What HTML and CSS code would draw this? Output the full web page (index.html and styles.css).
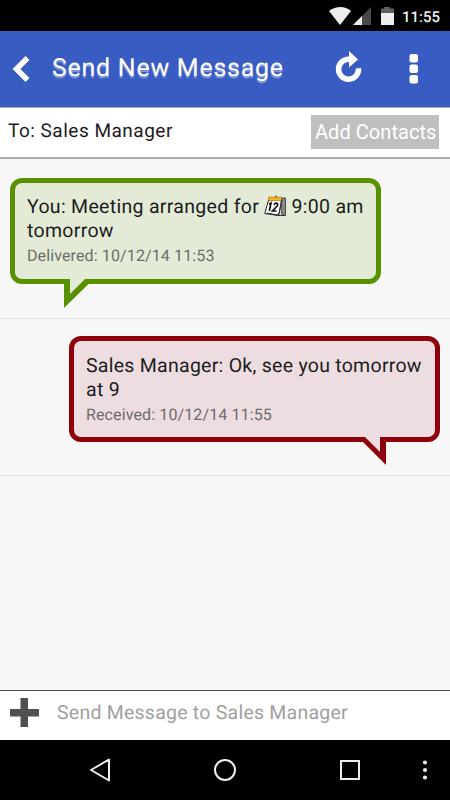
FILE: index.html
```html
<!DOCTYPE html>
<html lang="en">
<head>
<meta charset="utf-8">
<title>Send New Message</title>
<link rel="stylesheet" href="styles.css">
</head>
<body>
<div class="status">
  <svg class="signals" width="66" height="20" viewBox="0 0 66 20">
    <path fill="#eee" d="M0 4C7-1.300 16-1.300 22 4L11 18Z"/>
    <path fill="#484848" d="M42 0V18H24Z"/>
    <path fill="#eee" d="M33 9V18H24Z"/>
    <path fill="#606060" d="M52 1.500h3V0h6v1.500h4V6H52Z"/>
    <path fill="#eee" d="M52 6h13v12H52Z"/>
  </svg>
  <span class="clock">11:55</span>
</div>
<header class="header">
  <svg class="back" width="18" height="28" viewBox="0 0 18 28"><path d="M15.500 3L4.500 14l11 11" fill="none" stroke="#fff" stroke-width="5.500"/></svg>
  <h1 class="title">Send New Message</h1>
  <svg class="refresh" width="28" height="34" viewBox="0 0 28 34"><path d="M23.500 18.200A10 10 0 1 1 14 9.200" fill="none" stroke="#fff" stroke-width="5.500"/><path fill="#fff" d="M14 1l9 8.500-9 8Z"/></svg>
  <svg class="more" width="10" height="32" viewBox="0 0 10 32" fill="#fff"><rect x=".5" y="1" width="8.500" height="8.500" rx="2"/><rect x=".5" y="11.500" width="8.500" height="8.500" rx="2"/><rect x=".5" y="22" width="8.500" height="8.500" rx="2"/></svg>
</header>
<div class="recipient">
  <span class="to">To: Sales Manager</span>
  <button class="add"><span>Add Contacts</span></button>
</div>
<main class="thread">
  <section class="row">
    <div class="bubble sent">
      <p class="text">You: Meeting arranged for <svg class="calendar" width="22" height="22" viewBox="0 0 22 22"><path fill="#888" stroke="#333" stroke-width=".8" d="M17 3h4.500v18l-4-2Z"/><path fill="#fff" stroke="#222" d="M4.500 5L18 4.500 14.500 20.500.8 18.500Z"/><path fill="#f5b21b" stroke="#92620c" stroke-width=".5" d="M4.500 2h13v3.500h-13Z"/><path stroke="#333" d="M3 18l11.500 2.500h6M12 .5v2M17.500 5l-2.500 14"/><path fill="none" stroke="#111" stroke-width="1.700" d="M5 9.300l2-1.300-1.700 8M10 9.700q1.300-2.200 3-1.500 1.500 1-.3 3.300L8.500 16h4"/></svg> 9:00 am<br>tomorrow</p>
      <p class="meta">Delivered: 10/12/14 11:53</p>
      <svg class="tail" width="27" height="30" viewBox="0 0 27 30"><path fill="#579100" d="M1 0V29L25.500 5V0Z"/><path fill="#e3ebd7" d="M7 0V15L22 0Z"/></svg>
    </div>
  </section>
  <section class="row second">
    <div class="bubble received">
      <p class="text">Sales Manager: Ok, see you tomorrow<br>at 9</p>
      <p class="meta">Received: 10/12/14 11:55</p>
      <svg class="tail" width="27" height="30" viewBox="0 0 27 30"><path fill="#8f000d" d="M26 0V28L3 5V0Z"/><path fill="#eddde0" d="M20 0V15L5 0Z"/></svg>
    </div>
  </section>
</main>
<div class="compose">
  <svg class="plus" width="29" height="29" viewBox="0 0 29 29"><path fill="#505050" d="M10.500 0h7.500v11h11v7.500H18V29h-7.500V18.500H0V11h10.500Z"/></svg>
  <span class="hint">Send Message to Sales Manager</span>
</div>
<nav class="nav">
  <svg width="450" height="60" viewBox="0 0 450 60" fill="none" stroke="#eee" stroke-width="2"><path stroke-linejoin="round" d="M109 19.500v21L91 30Z"/><circle cx="225" cy="30" r="10"/><rect x="341" y="21" width="18" height="18"/><g fill="#eee" stroke="none"><circle cx="425" cy="22.500" r="2.100"/><circle cx="425" cy="30" r="2.100"/><circle cx="425" cy="37.500" r="2.100"/></g></svg>
</nav>
</body>
</html>
```
FILE: styles.css
```css
* { box-sizing: border-box; }
body {
  margin: 0;
  width: 450px;
  height: 800px;
  display: flex;
  flex-direction: column;
  overflow: hidden;
  background: #f7f7f7;
  color: #1c1c1c;
  font-family: Roboto, sans-serif;
  text-rendering: geometricPrecision;
  white-space: nowrap;
}
h1, p { margin: 0; }
svg { flex: none; }
.status {
  height: 31px;
  display: flex;
  justify-content: flex-end;
  align-items: center;
  gap: 7px;
  padding: 2px 10px 0 0;
  background: #000;
}
.clock {
  width: 38px;
  color: #eee;
  font-size: 15px;
  font-weight: 500;
  line-height: 30px;
}
.header {
  height: 77px;
  display: flex;
  align-items: center;
  padding-left: 12px;
  background: #385cc1;
  border-bottom: 1px solid #a5abba;
}
.title {
  width: 281px;
  padding: 0 0 2px 22px;
  color: #fff;
  font-size: 25px;
  font-weight: 400;
  letter-spacing: .73px;
  text-shadow: 0 2px 1px rgba(255, 255, 255, .4);
}
.refresh { margin: 0 0 4px 24px; }
.more { margin-left: 46px; }
.recipient {
  height: 51px;
  display: flex;
  justify-content: space-between;
  align-items: center;
  padding: 0 11px 1px 8px;
  background: #fff;
  border-bottom: 2px solid #a9aaa9;
}
.to { padding-bottom: 3px; font-size: 19px; letter-spacing: .5px; }
.add {
  width: 128px;
  height: 34px;
  padding: 0 0 0 4px;
  border: 0;
  background: #bfbfbf;
  color: #fff;
  font: 20px Roboto, sans-serif;
  letter-spacing: .05px;
  text-align: left;
}
.thread { flex: 1; }
.row {
  height: 160px;
  display: flex;
  padding: 19px 10px 0;
  border-bottom: 1px solid #dcdcdc;
}
.row.second {
  height: 157px;
  justify-content: flex-end;
  padding-top: 17px;
}
.bubble {
  position: relative;
  width: 371px;
  height: 106px;
  padding: 12px 0 0 12px;
  border: 5px solid;
  border-radius: 12px;
}
.received { padding-top: 13px; }
.sent { background: #e3ebd7; border-color: #579100; }
.received { background: #eddde0; border-color: #8f000d; }
.text {
  font-size: 19.500px;
  line-height: 24px;
  letter-spacing: .27px;
}
.sent .text { letter-spacing: .31px; }
.meta {
  margin-top: 1px;
  color: #6b6b6b;
  font-size: 16px;
  line-height: 24px;
  letter-spacing: .12px;
}
.calendar { vertical-align: -4px; }
.tail { position: absolute; top: 96px; }
.sent .tail { left: 48px; }
.received .tail { right: 48px; }
.compose {
  height: 50px;
  display: flex;
  align-items: center;
  padding: 0 0 6px 10px;
  background: #fff;
  border-top: 1px solid #505050;
}
.hint {
  margin-left: 18px;
  color: #a0a0a0;
  font-size: 19.500px;
  letter-spacing: .24px;
}
.nav { height: 60px; background: #000; }
```
